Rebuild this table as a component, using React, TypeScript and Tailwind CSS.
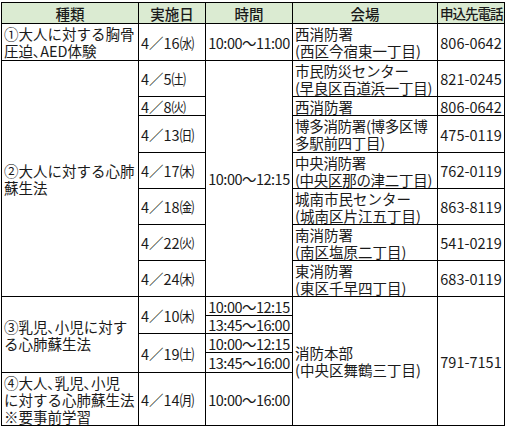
import React from "react"

const td = "border border-black px-[2px] py-0 align-middle whitespace-nowrap overflow-hidden"
const tm = `${td} text-center tracking-[-0.5px] text-[14.5px]`

export default function App() {
  return (
    <div className="w-[510px] h-[427px] bg-white pt-[2px] pl-[1px] text-[14.5px] leading-[17px] text-[#1a1a1a] font-['Noto_Sans_CJK_JP',sans-serif]">
      <table className="border-collapse table-fixed w-[503px]">
        <colgroup>
          <col className="w-[137px]" />
          <col className="w-[67px]" />
          <col className="w-[87px]" />
          <col className="w-[145px]" />
          <col className="w-[67px]" />
        </colgroup>
        <thead>
          <tr className="h-[21px] bg-[#dbebd2]">
            <th className={`${td} text-center font-medium`}>種類</th>
            <th className={`${td} text-center font-medium`}>実施日</th>
            <th className={`${td} text-center font-medium`}>時間</th>
            <th className={`${td} text-center font-medium`}>会場</th>
            <th className={`${td} text-center font-medium text-[13.5px] tracking-[-1px]`}>申込先電話</th>
          </tr>
        </thead>
        <tbody>
          <tr className="h-[37px]">
            <td className={td}>①大人に対する胸骨<br />圧迫､AED体験</td>
            <td className={td}>4／16㈬</td>
            <td className={tm}>10:00～11:00</td>
            <td className={td}>西消防署<br />(西区今宿東一丁目)</td>
            <td className={`${td} text-center`}>806-0642</td>
          </tr>
          <tr className="h-[36px]">
            <td className={td} rowSpan={7}>②大人に対する心肺<br />蘇生法</td>
            <td className={td}>4／5㈯</td>
            <td className={tm} rowSpan={7}>10:00～12:15</td>
            <td className={`${td} tracking-[-0.3px]`}>市民防災センター<br />(早良区百道浜一丁目)</td>
            <td className={`${td} text-center`}>821-0245</td>
          </tr>
          <tr className="h-[19px]">
            <td className={td}>4／8㈫</td>
            <td className={td}>西消防署</td>
            <td className={`${td} text-center`}>806-0642</td>
          </tr>
          <tr className="h-[37px]">
            <td className={td}>4／13㈰</td>
            <td className={`${td} tracking-[-0.3px]`}>博多消防署(博多区博<br />多駅前四丁目)</td>
            <td className={`${td} text-center`}>475-0119</td>
          </tr>
          <tr className="h-[36px]">
            <td className={td}>4／17㈭</td>
            <td className={`${td} tracking-[-0.3px]`}>中央消防署<br />(中央区那の津二丁目)</td>
            <td className={`${td} text-center`}>762-0119</td>
          </tr>
          <tr className="h-[36px]">
            <td className={td}>4／18㈮</td>
            <td className={td}>城南市民センター<br />(城南区片江五丁目)</td>
            <td className={`${td} text-center`}>863-8119</td>
          </tr>
          <tr className="h-[36px]">
            <td className={td}>4／22㈫</td>
            <td className={td}>南消防署<br />(南区塩原二丁目)</td>
            <td className={`${td} text-center`}>541-0219</td>
          </tr>
          <tr className="h-[36px]">
            <td className={td}>4／24㈭</td>
            <td className={td}>東消防署<br />(東区千早四丁目)</td>
            <td className={`${td} text-center`}>683-0119</td>
          </tr>
          <tr className="h-[19px]">
            <td className={td} rowSpan={4}>③乳児､小児に対す<br />る心肺蘇生法</td>
            <td className={td} rowSpan={2}>4／10㈭</td>
            <td className={tm}>10:00～12:15</td>
            <td className={td} rowSpan={5}>消防本部<br />(中央区舞鶴三丁目)</td>
            <td className={`${td} text-center`} rowSpan={5}>791-7151</td>
          </tr>
          <tr className="h-[18px]">
            <td className={tm}>13:45～16:00</td>
          </tr>
          <tr className="h-[19px]">
            <td className={td} rowSpan={2}>4／19㈯</td>
            <td className={tm}>10:00～12:15</td>
          </tr>
          <tr className="h-[20px]">
            <td className={tm}>13:45～16:00</td>
          </tr>
          <tr className="h-[53px]">
            <td className={td}>④大人､乳児､小児<br />に対する心肺蘇生法<br />※要事前学習</td>
            <td className={td}>4／14㈪</td>
            <td className={tm}>10:00～16:00</td>
          </tr>
        </tbody>
      </table>
    </div>
  )
}
